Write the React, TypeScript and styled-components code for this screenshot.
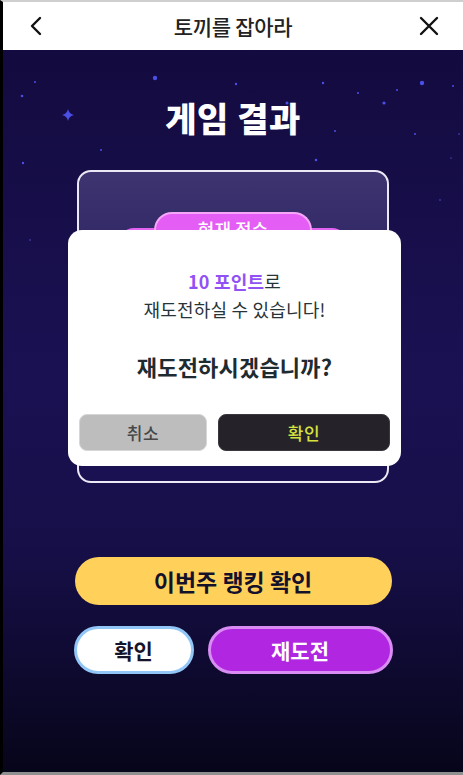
import React from "react";
import styled, { createGlobalStyle } from "styled-components";

const Global = createGlobalStyle`
  html, body { margin: 0; padding: 0; background: #0a0818; }
  body { font-family: "Noto Sans CJK KR", "Noto Sans", sans-serif; }
  * { box-sizing: border-box; }
`;

const Frame = styled.div`
  position: relative;
  width: 463px;
  height: 775px;
  border-top: 2px solid #cfcfcf;
  border-left: 3px solid #000;
  border-bottom: 3px solid #8f8f8f;
  display: flex;
  flex-direction: column;
  overflow: hidden;
`;

const Header = styled.header`
  height: 48px;
  flex: none;
  background: #fff;
  display: flex;
  align-items: center;
  justify-content: space-between;
  padding: 0 22px 0 22px;
`;

const HeaderTitle = styled.h1`
  margin: 0;
  font-size: 21px;
  font-weight: 500;
  color: #222;
  letter-spacing: -0.3px;
`;

const IconButton = styled.button`
  width: 24px;
  height: 24px;
  padding: 0;
  border: none;
  background: none;
  display: flex;
  align-items: center;
  justify-content: center;
`;

const Stage = styled.main`
  position: relative;
  flex: 1;
  background: linear-gradient(180deg, #130b3f 0%, #1a1153 45%, #160f47 70%, #07051a 100%);
  display: flex;
  flex-direction: column;
  align-items: center;
  padding-top: 48px;
`;

const Stars = styled.svg`
  position: absolute;
  left: -3px;
  top: -50px;
  pointer-events: none;
`;

const ResultTitle = styled.h2`
  margin: 0;
  height: 40px;
  line-height: 40px;
  font-size: 34px;
  font-weight: 900;
  color: #fff;
  letter-spacing: 0.5px;
`;

const Card = styled.section`
  margin-top: 32px;
  width: 312px;
  height: 313px;
  border: 2px solid #ece8f5;
  border-radius: 14px;
  background: linear-gradient(180deg, #3d3470 0%, #2c2461 35%, #1c1354 70%, #1a1152 100%);
  display: flex;
  flex-direction: column;
  align-items: center;
  padding-top: 40px;
`;

const ScoreLabel = styled.div`
  position: relative;
  width: 158px;
  height: 36px;
  border: 2px solid #f6a6f8;
  border-bottom: none;
  border-radius: 18px 18px 0 0;
  background: #e45df4;
  color: #fff;
  font-size: 18px;
  font-weight: 500;
  text-align: center;
  line-height: 30px;
`;

const ScoreBox = styled.div`
  margin-top: -20px;
  width: 230px;
  height: 110px;
  border-radius: 16px;
  background: #e262f2;
`;

const Actions = styled.div`
  margin-top: 74px;
  display: flex;
  flex-direction: column;
  align-items: center;
  gap: 21px;
`;

const RankButton = styled.button`
  width: 317px;
  height: 48px;
  border: none;
  border-radius: 24px;
  background: #ffd15b;
  color: #14122a;
  font-family: inherit;
  font-size: 23px;
  font-weight: 700;
`;

const Row = styled.div`
  display: flex;
  gap: 14px;
`;

const PillButton = styled.button<{ $variant: "light" | "purple" }>`
  height: 48px;
  width: ${(p) => (p.$variant === "light" ? "120px" : "185px")};
  border-radius: 24px;
  border: 3px solid ${(p) => (p.$variant === "light" ? "#91c6f7" : "#d98cf4")};
  background: ${(p) => (p.$variant === "light" ? "#fff" : "#b126e1")};
  color: ${(p) => (p.$variant === "light" ? "#16142a" : "#fff")};
  font-family: inherit;
  font-size: 21px;
  font-weight: 700;
`;

const Modal = styled.div`
  position: absolute;
  z-index: 5;
  left: 65px;
  top: 228px;
  width: 333px;
  height: 236px;
  background: #fff;
  border-radius: 14px;
  display: flex;
  flex-direction: column;
  align-items: center;
  padding: 37px 11px 15px;
`;

const Line = styled.p`
  margin: 0;
  font-size: 18px;
  line-height: 28px;
  color: #27343a;
  font-weight: 400;
  letter-spacing: 0.2px;
`;

const Accent = styled.span`
  color: #9152f5;
  font-weight: 600;
`;

const Question = styled.p`
  margin: 28px 0 0;
  font-size: 22px;
  line-height: 30px;
  font-weight: 700;
  color: #1e2b31;
  letter-spacing: 0.2px;
`;

const ModalButtons = styled.div`
  margin-top: auto;
  width: 100%;
  display: flex;
  gap: 11px;
`;

const ModalButton = styled.button<{ $primary?: boolean }>`
  height: 37px;
  flex: ${(p) => (p.$primary ? "0 0 172px" : "0 0 128px")};
  border-radius: 8px;
  border: 1px solid ${(p) => (p.$primary ? "#3a383e" : "#d6d6d6")};
  background: ${(p) => (p.$primary ? "#252329" : "#bdbdbd")};
  color: ${(p) => (p.$primary ? "#d5e23f" : "#474747")};
  font-family: inherit;
  font-size: 17px;
  font-weight: 500;
  letter-spacing: 0.5px;
`;

const dots: [number, number, number][] = [
  [155, 78, 2.2], [35, 82, 1], [236, 84, 1.2], [323, 83, 1.2], [422, 83, 2.2],
  [453, 86, 1], [397, 90, 1], [358, 93, 1.1], [22, 96, 1.3], [384, 103, 1.6],
  [287, 103, 1.5], [335, 131, 1], [415, 134, 1], [459, 134, 0.8], [101, 150, 1],
  [316, 160, 1.3], [23, 163, 1.2], [451, 158, 0.7], [440, 200, 0.8], [30, 240, 0.8],
];

export default function App() {
  return (
    <>
      <Global />
      <Frame>
        <Header>
          <IconButton aria-label="back">
            <svg width="20" height="22" viewBox="0 0 20 22">
              <path d="M13 3 L5 11 L13 19" fill="none" stroke="#111" strokeWidth="2.4" strokeLinecap="round" strokeLinejoin="round" />
            </svg>
          </IconButton>
          <HeaderTitle>토끼를 잡아라</HeaderTitle>
          <IconButton aria-label="close">
            <svg width="22" height="22" viewBox="0 0 22 22">
              <path d="M3 3 L19 19 M19 3 L3 19" fill="none" stroke="#111" strokeWidth="2.4" strokeLinecap="round" />
            </svg>
          </IconButton>
        </Header>
        <Stage>
          <Stars width="463" height="300" viewBox="0 0 463 300">
            {dots.map(([x, y, r], i) => (
              <circle key={i} cx={x} cy={y} r={r} fill="#4b4fe6" />
            ))}
            <path d="M68 109 Q69 114 74 115 Q69 116 68 121 Q67 116 62 115 Q67 114 68 109 Z" fill="#4b4fe6" />
          </Stars>
          <ResultTitle>게임 결과</ResultTitle>
          <Card>
            <ScoreLabel>현재 점수</ScoreLabel>
            <ScoreBox />
          </Card>
          <Actions>
            <RankButton>이번주 랭킹 확인</RankButton>
            <Row>
              <PillButton $variant="light">확인</PillButton>
              <PillButton $variant="purple">재도전</PillButton>
            </Row>
          </Actions>
        </Stage>
        <Modal role="dialog">
          <Line>
            <Accent>10 포인트</Accent>로
          </Line>
          <Line>재도전하실 수 있습니다!</Line>
          <Question>재도전하시겠습니까?</Question>
          <ModalButtons>
            <ModalButton>취소</ModalButton>
            <ModalButton $primary>확인</ModalButton>
          </ModalButtons>
        </Modal>
      </Frame>
    </>
  );
}
